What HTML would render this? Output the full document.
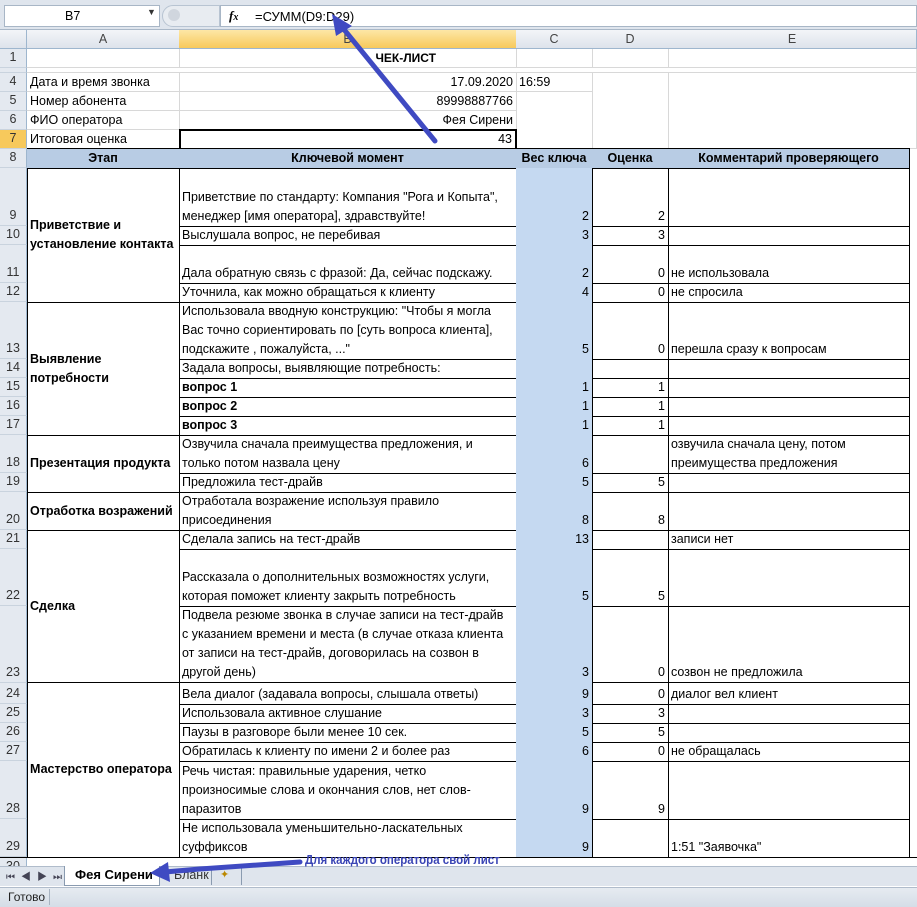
<!DOCTYPE html>
<html><head><meta charset="utf-8"><style>
*{margin:0;padding:0;box-sizing:border-box}
body{width:917px;height:907px;overflow:hidden;background:#fff;position:relative;font-family:"Liberation Sans","Noto Sans CJK SC",sans-serif;font-size:12.5px;color:#000}
div{position:absolute}
.g{border-right:1px solid #d8d8d8;border-bottom:1px solid #d8d8d8}
.t{border-right:1px solid #000;border-bottom:1px solid #000;display:flex;align-items:flex-end;padding:0 3px;line-height:19px;white-space:nowrap;overflow:hidden}
.r{justify-content:flex-end}
.a{left:27px;width:153px}.b{left:179px;width:338px}.c{left:516px;width:77px;background:#c5d9f1}.d{left:592px;width:77px}.e{left:668px;width:242px}
.rh{left:0;width:27px;background:#e4e9f0;border-right:1px solid #9eb6ce;border-bottom:1px solid #c9d3de;display:flex;align-items:flex-end;justify-content:center;line-height:19px;color:#333;font-size:12.5px}
.ch{top:30px;height:19px;background:linear-gradient(#f3f5f8,#dde3eb);border-right:1px solid #9eb6ce;border-bottom:1px solid #9eb6ce;text-align:center;line-height:18px;color:#444}
.bd{font-weight:bold}
.grp{align-items:center;white-space:normal;font-weight:bold;line-height:19px}
</style></head><body>
<!-- formula bar -->
<div style="left:0;top:0;width:917px;height:30px;background:#dfe5ed;border-bottom:1px solid #aab8c8"></div>
<div style="left:4px;top:5px;width:156px;height:22px;background:#fff;border:1px solid #a8b6c6;line-height:20px;padding-left:60px">B7</div>
<div style="left:147px;top:7px;font-size:9px;color:#333">▼</div>
<div style="left:162px;top:5px;width:58px;height:22px;background:#e8ecf1;border-radius:11px 0 0 11px;border:1px solid #b8c4d2"></div>
<div style="left:168px;top:9px;width:12px;height:12px;border-radius:6px;background:#d0d6de"></div>
<div style="left:220px;top:5px;width:697px;height:22px;background:#fff;border:1px solid #a8b6c6"></div>
<div style="left:229px;top:8px;font-style:italic;font-family:'Liberation Serif',serif;font-size:13px;font-weight:bold">f<span style="font-size:10px">x</span></div>
<div style="left:255px;top:9px;font-size:13px">=СУММ(D9:D29)</div>
<!-- column headers -->
<div class="ch" style="left:0;width:27px"></div>
<div class="ch" style="left:27px;width:153px">A</div>
<div class="ch" style="left:179px;width:338px;background:linear-gradient(#fde7a6,#f7c95c)">B</div>
<div class="ch" style="left:516px;width:77px">C</div>
<div class="ch" style="left:592px;width:77px">D</div>
<div class="ch" style="left:668px;width:249px">E</div>
<!-- row headers -->
<div class="rh" style="top:49px;height:19px">1</div>
<div class="rh" style="top:68px;height:5px"></div>
<div class="rh" style="top:73px;height:19px">4</div>
<div class="rh" style="top:92px;height:19px">5</div>
<div class="rh" style="top:111px;height:19px">6</div>
<div class="rh" style="top:130px;height:19px;background:#f7c95c">7</div>
<div class="rh" style="top:149px;height:19px">8</div>
<div class="rh" style="top:168px;height:58px">9</div>
<div class="rh" style="top:226px;height:19px">10</div>
<div class="rh" style="top:245px;height:38px">11</div>
<div class="rh" style="top:283px;height:19px">12</div>
<div class="rh" style="top:302px;height:57px">13</div>
<div class="rh" style="top:359px;height:19px">14</div>
<div class="rh" style="top:378px;height:19px">15</div>
<div class="rh" style="top:397px;height:19px">16</div>
<div class="rh" style="top:416px;height:19px">17</div>
<div class="rh" style="top:435px;height:38px">18</div>
<div class="rh" style="top:473px;height:19px">19</div>
<div class="rh" style="top:492px;height:38px">20</div>
<div class="rh" style="top:530px;height:19px">21</div>
<div class="rh" style="top:549px;height:57px">22</div>
<div class="rh" style="top:606px;height:77px">23</div>
<div class="rh" style="top:683px;height:21px">24</div>
<div class="rh" style="top:704px;height:19px">25</div>
<div class="rh" style="top:723px;height:19px">26</div>
<div class="rh" style="top:742px;height:19px">27</div>
<div class="rh" style="top:761px;height:58px">28</div>
<div class="rh" style="top:819px;height:38px">29</div>
<div class="rh" style="top:857px;height:10px;overflow:hidden;align-items:flex-start">30</div>
<!-- top info grid -->
<div class="g a" style="top:49px;height:19px"></div>
<div class="g" style="left:179px;width:338px;top:49px;height:19px;text-align:right;padding-right:80px;line-height:19px;font-weight:bold;font-size:12px">ЧЕК-ЛИСТ</div>
<div class="g c" style="top:49px;height:19px;background:none"></div><div class="g d" style="top:49px;height:19px"></div><div class="g e" style="top:49px;height:19px;width:249px"></div>
<div class="g" style="left:27px;width:890px;top:68px;height:5px"></div>
<div class="g a" style="top:73px;height:19px;line-height:19px;padding-left:3px">Дата и время звонка</div>
<div class="g b" style="top:73px;height:19px;line-height:19px;text-align:right;padding-right:3px">17.09.2020</div>
<div class="g" style="left:516px;width:77px;top:73px;height:19px;line-height:19px;padding-left:3px">16:59</div>
<div class="g a" style="top:92px;height:19px;line-height:19px;padding-left:3px">Номер абонента</div>
<div class="g b" style="top:92px;height:19px;line-height:19px;text-align:right;padding-right:3px">89998887766</div>
<div class="g a" style="top:111px;height:19px;line-height:19px;padding-left:3px">ФИО оператора</div>
<div class="g b" style="top:111px;height:19px;line-height:19px;text-align:right;padding-right:3px">Фея Сирени</div>
<div class="g a" style="top:130px;height:19px;line-height:19px;padding-left:3px">Итоговая оценка</div>
<div style="left:179px;width:338px;top:129px;height:21px;border:2px solid #000;line-height:17px;text-align:right;padding-right:3px">43</div>
<div class="g" style="left:516px;width:77px;top:73px;height:76px;border-bottom:none"></div>
<div class="g d" style="top:73px;height:76px"></div>
<div class="g e" style="top:73px;height:76px;width:249px"></div>
<div style="left:0;top:857px;width:917px;height:10px;border-top:1px solid #000"></div>
<div class="g" style="left:910px;top:149px;width:7px;height:718px;border-right:none"></div>
<!-- table header -->
<div style="left:27px;top:148px;width:883px;height:1px;background:#000"></div>
<div style="left:27px;top:149px;width:1px;height:708px;background:#000"></div>
<div class="t a bd" style="top:149px;height:20px;background:#b8cce4;justify-content:center">Этап</div>
<div class="t b bd" style="top:149px;height:20px;background:#b8cce4;justify-content:center">Ключевой момент</div>
<div class="t c bd" style="top:149px;height:20px;background:#b8cce4;justify-content:center">Вес ключа</div>
<div class="t d bd" style="top:149px;height:20px;background:#b8cce4;justify-content:center">Оценка</div>
<div class="t e bd" style="top:149px;height:20px;background:#b8cce4;justify-content:center">Комментарий проверяющего</div>
<!-- groups -->
<div class="t a grp" style="top:168px;height:135px">Приветствие и установление контакта</div>
<div class="t a grp" style="top:302px;height:134px">Выявление потребности</div>
<div class="t a grp" style="top:435px;height:58px">Презентация продукта</div>
<div class="t a grp" style="top:492px;height:39px">Отработка возражений</div>
<div class="t a grp" style="top:530px;height:153px">Сделка</div>
<div class="t a grp" style="top:682px;height:176px">Мастерство оператора</div>
<!-- rows -->
<div class="t b" style="top:168px;height:59px;white-space:normal">Приветствие по стандарту: Компания "Рога и Копыта", менеджер [имя оператора], здравствуйте!</div>
<div class="t c r" style="top:168px;height:59px">2</div><div class="t d r" style="top:168px;height:59px">2</div><div class="t e" style="top:168px;height:59px"></div>
<div class="t b" style="top:226px;height:20px">Выслушала вопрос, не перебивая</div>
<div class="t c r" style="top:226px;height:20px">3</div><div class="t d r" style="top:226px;height:20px">3</div><div class="t e" style="top:226px;height:20px"></div>
<div class="t b" style="top:245px;height:39px">Дала обратную связь с фразой: Да, сейчас подскажу.</div>
<div class="t c r" style="top:245px;height:39px">2</div><div class="t d r" style="top:245px;height:39px">0</div><div class="t e" style="top:245px;height:39px">не использовала</div>
<div class="t b" style="top:283px;height:20px">Уточнила, как можно обращаться к клиенту</div>
<div class="t c r" style="top:283px;height:20px">4</div><div class="t d r" style="top:283px;height:20px">0</div><div class="t e" style="top:283px;height:20px">не спросила</div>
<div class="t b" style="top:302px;height:58px;white-space:normal">Использовала вводную конструкцию: "Чтобы я могла Вас точно сориентировать по [суть вопроса клиента], подскажите , пожалуйста, ..."</div>
<div class="t c r" style="top:302px;height:58px">5</div><div class="t d r" style="top:302px;height:58px">0</div><div class="t e" style="top:302px;height:58px">перешла сразу к вопросам</div>
<div class="t b" style="top:359px;height:20px">Задала вопросы, выявляющие потребность:</div>
<div class="t c" style="top:359px;height:20px"></div><div class="t d" style="top:359px;height:20px"></div><div class="t e" style="top:359px;height:20px"></div>
<div class="t b bd" style="top:378px;height:20px">вопрос 1</div>
<div class="t c r" style="top:378px;height:20px">1</div><div class="t d r" style="top:378px;height:20px">1</div><div class="t e" style="top:378px;height:20px"></div>
<div class="t b bd" style="top:397px;height:20px">вопрос 2</div>
<div class="t c r" style="top:397px;height:20px">1</div><div class="t d r" style="top:397px;height:20px">1</div><div class="t e" style="top:397px;height:20px"></div>
<div class="t b bd" style="top:416px;height:20px">вопрос 3</div>
<div class="t c r" style="top:416px;height:20px">1</div><div class="t d r" style="top:416px;height:20px">1</div><div class="t e" style="top:416px;height:20px"></div>
<div class="t b" style="top:435px;height:39px;white-space:normal">Озвучила сначала преимущества предложения, и только потом назвала цену</div>
<div class="t c r" style="top:435px;height:39px">6</div><div class="t d" style="top:435px;height:39px"></div><div class="t e" style="top:435px;height:39px;white-space:normal">озвучила сначала цену, потом преимущества предложения</div>
<div class="t b" style="top:473px;height:20px">Предложила тест-драйв</div>
<div class="t c r" style="top:473px;height:20px">5</div><div class="t d r" style="top:473px;height:20px">5</div><div class="t e" style="top:473px;height:20px"></div>
<div class="t b" style="top:492px;height:39px;white-space:normal">Отработала возражение используя правило присоединения</div>
<div class="t c r" style="top:492px;height:39px">8</div><div class="t d r" style="top:492px;height:39px">8</div><div class="t e" style="top:492px;height:39px"></div>
<div class="t b" style="top:530px;height:20px">Сделала запись на тест-драйв</div>
<div class="t c r" style="top:530px;height:20px">13</div><div class="t d" style="top:530px;height:20px"></div><div class="t e" style="top:530px;height:20px">записи нет</div>
<div class="t b" style="top:549px;height:58px;white-space:normal">Рассказала о дополнительных возможностях услуги, которая поможет клиенту закрыть потребность</div>
<div class="t c r" style="top:549px;height:58px">5</div><div class="t d r" style="top:549px;height:58px">5</div><div class="t e" style="top:549px;height:58px"></div>
<div class="t b" style="top:606px;height:77px;white-space:normal">Подвела резюме звонка в случае записи на тест-драйв с указанием времени и места (в случае отказа клиента от записи на тест-драйв, договорилась на созвон в другой день)</div>
<div class="t c r" style="top:606px;height:77px">3</div><div class="t d r" style="top:606px;height:77px">0</div><div class="t e" style="top:606px;height:77px">созвон не предложила</div>
<div class="t b" style="top:682px;height:23px">Вела диалог (задавала вопросы, слышала ответы)</div>
<div class="t c r" style="top:682px;height:23px">9</div><div class="t d r" style="top:682px;height:23px">0</div><div class="t e" style="top:682px;height:23px">диалог вел клиент</div>
<div class="t b" style="top:704px;height:20px">Использовала активное слушание</div>
<div class="t c r" style="top:704px;height:20px">3</div><div class="t d r" style="top:704px;height:20px">3</div><div class="t e" style="top:704px;height:20px"></div>
<div class="t b" style="top:723px;height:20px">Паузы в разговоре были менее 10 сек.</div>
<div class="t c r" style="top:723px;height:20px">5</div><div class="t d r" style="top:723px;height:20px">5</div><div class="t e" style="top:723px;height:20px"></div>
<div class="t b" style="top:742px;height:20px">Обратилась к клиенту по имени 2 и более раз</div>
<div class="t c r" style="top:742px;height:20px">6</div><div class="t d r" style="top:742px;height:20px">0</div><div class="t e" style="top:742px;height:20px">не обращалась</div>
<div class="t b" style="top:761px;height:59px;white-space:normal">Речь чистая: правильные ударения, четко произносимые слова и окончания слов, нет слов-паразитов</div>
<div class="t c r" style="top:761px;height:59px">9</div><div class="t d r" style="top:761px;height:59px">9</div><div class="t e" style="top:761px;height:59px"></div>
<div class="t b" style="top:819px;height:39px;white-space:normal">Не использовала уменьшительно-ласкательных суффиксов</div>
<div class="t c r" style="top:819px;height:39px">9</div><div class="t d" style="top:819px;height:39px"></div><div class="t e" style="top:819px;height:39px">1:51 "Заявочка"</div>
<!-- tabs -->
<div style="left:0;top:866px;width:917px;height:20px;background:#dfe5ed;border-top:1px solid #b0bccb"></div>
<div style="left:6px;top:868px;font-size:10px;color:#445;letter-spacing:6px">⏮◀▶⏭</div>
<div style="left:64px;top:866px;width:96px;height:20px;background:#fff;border:1px solid #8a9bb0;border-top:none;font-weight:bold;line-height:18px;padding-left:10px;font-size:13px">Фея Сирени</div>
<div style="left:160px;top:866px;width:52px;height:19px;border-right:1px solid #8a9bb0;line-height:18px;padding-left:14px;color:#333">Бланк</div>
<div style="left:212px;top:866px;width:30px;height:19px;border-right:1px solid #8a9bb0;padding-left:8px;line-height:18px;font-size:11px;color:#b80">✦</div>
<!-- status -->
<div style="left:0;top:887px;width:917px;height:20px;background:linear-gradient(#e6ebf1,#d5dde7);border-top:1px solid #b0bccb"></div>
<div style="left:8px;top:890px;font-size:12px;color:#222">Готово</div>
<div style="left:49px;top:889px;width:1px;height:16px;background:#a8b4c2"></div>
<!-- annotations -->
<div style="left:305px;top:853px;color:#3a45b5;font-weight:bold;font-size:12.5px;transform:scaleX(0.92);transform-origin:left">Для каждого оператора свой лист</div>
<svg style="position:absolute;left:0;top:0" width="917" height="907">
<g stroke="#3f4ac2" stroke-linecap="round" fill="#3f4ac2">
<line x1="435" y1="141" x2="342" y2="27" stroke-width="5"/>
<polygon points="332,14 352,26 336,36" stroke="none"/>
<path d="M300 862 L200 869 L165 872" stroke-width="5" fill="none"/>
<polygon points="150,873 168,862 170,882" stroke="none"/>
</g>
</svg>
</body></html>
